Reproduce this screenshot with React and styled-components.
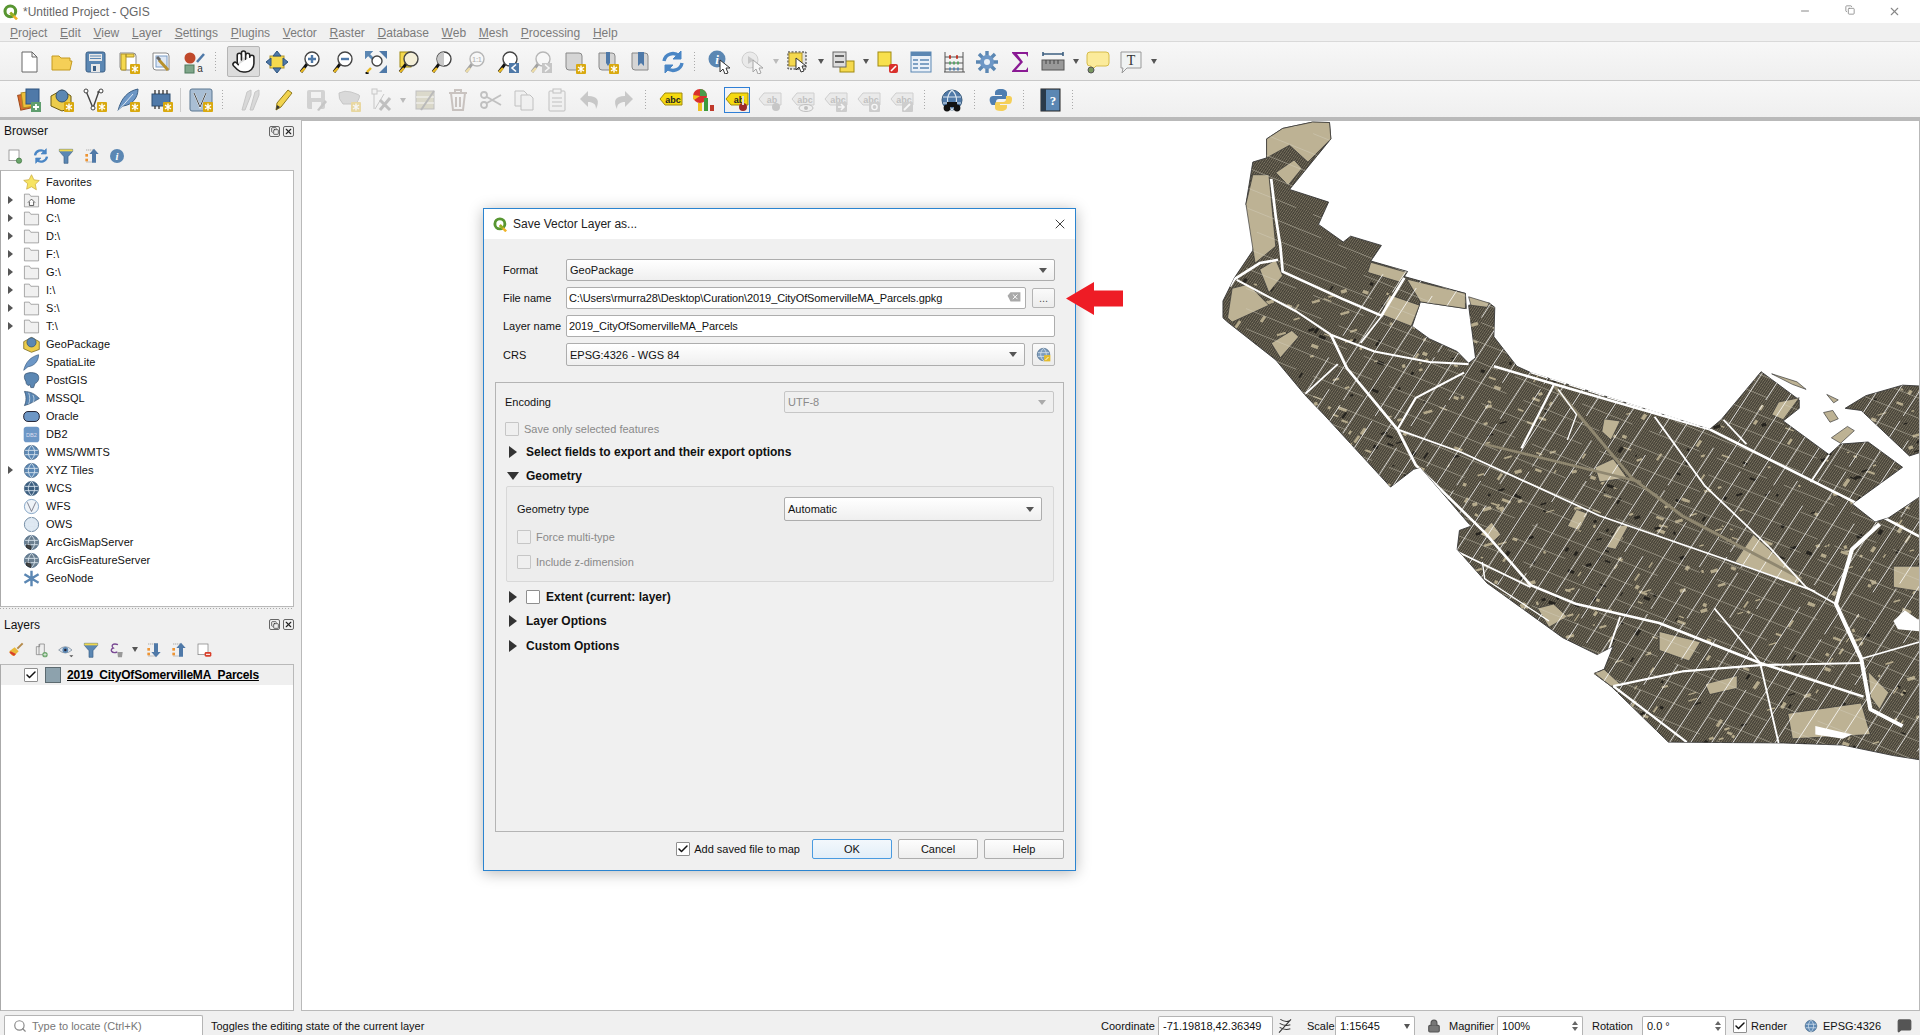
import React from "react";
import styled, { createGlobalStyle } from "styled-components";
import { Hand, Search, X, Minus, Copy, Check, Lock, MessageSquare } from "lucide-react";

const GlobalStyle = createGlobalStyle`
  html, body { margin: 0; padding: 0; background: #f0f0f0; }
  body { font-family: "Liberation Sans", Arial, sans-serif; font-size: 11px; color: #111; }
  * { box-sizing: border-box; }
`;

// --- icon parts ---
const Star = ({ x = 14, y = 14 }) => (
  <g transform={`translate(${x} ${y})`}>
    <rect width="10" height="10" fill="#d9a90f" rx="1" />
    <path d="M5 1.5v7M2 3l6 4M8 3L2 7" stroke="#fff" strokeWidth="1.4" />
  </g>
);
const Lens = ({ fill = "#fff", x = 14, y = 9, r = 7 }) => (
  <g>
    <path d={`M${x - r * 0.7} ${y + r * 0.7}L3 22`} stroke="#111" strokeWidth="3" />
    <path d={`M7 18L3 22`} stroke="#e8b923" strokeWidth="2.4" />
    <circle cx={x} cy={y} r={r} fill={fill} stroke="#444" strokeWidth="1.4" />
  </g>
);
const Page = ({ fill = "#eee", stroke = "#888" }) => (
  <path d="M4 3h13q3 0 3 3v14H7q-3 0-3-3z" fill={fill} stroke={stroke} />
);
const Pointer = ({ x = 11, y = 9 }) => (
  <path transform={`translate(${x} ${y})`} d="M0 0l0 12 3-3 2 5 3-1-2-5h4z" fill="#fff" stroke="#333" strokeWidth="1" />
);
const LabelTag = ({ fill = "#f5d90f", stroke = "#a08a10", color = "#222", t = "abc" }) => (
  <g>
    <path d="M1 11l5-6h17v12H6z" fill={fill} stroke={stroke} />
    <text x="14" y="14.5" fontSize="9" fontWeight="700" textAnchor="middle" fill={color} fontFamily="Liberation Sans">{t}</text>
  </g>
);
const Globe = ({ c = "#5b87b3" }) => (
  <g>
    <circle cx="12" cy="12" r="10" fill={c} stroke="#3d5f80" />
    <path d="M3 9h18M3 15h18M12 2c-6 6-6 14 0 20M12 2c6 6 6 14 0 20" stroke="#dbe6f0" fill="none" strokeWidth="1.2" />
  </g>
);

const icons = {
  new: <path d="M5 2h10l5 5v15H5z M15 2v5h5" fill="#fff" stroke="#666" />,
  open: <path d="M2 20V6h7l2 2h9v3h2l-2 9z" fill="#f5cf57" stroke="#c49a20" />,
  save: (<g><rect x="3" y="2" width="19" height="20" rx="2" fill="#5b87b3" stroke="#3b5f85" /><rect x="6" y="4" width="13" height="7" fill="#e8e8e8" /><path d="M7 6h11M7 8.5h11" stroke="#5b87b3" /><rect x="8" y="14" width="9" height="8" fill="#e8e8e8" /><rect x="10" y="16" width="3" height="5" fill="#3b5f85" /></g>),
  layoutNew: (<g><Page fill="#fff" /><path d="M5 4h5v16H5zM10 4h8v3h-8z" fill="#f5d94e" stroke="#b0932a" /><Star /></g>),
  layoutMgr: (<g><Page fill="#fff" /><rect x="7" y="6" width="11" height="11" fill="#dfe8f4" stroke="#7a9cc6" /><path d="M10 10l9 10" stroke="#b8912c" strokeWidth="3" /><path d="M8 7l3 3" stroke="#666" strokeWidth="3" /></g>),
  style: (<g><circle cx="8" cy="8" r="5.5" fill="#c0492b" /><path d="M15 12l7-8" stroke="#4f79a8" strokeWidth="2.5" /><rect x="3" y="15" width="9" height="8" fill="#7fa68a" stroke="#4f7a5c" /><text x="18" y="22" fontSize="10" fill="#333" textAnchor="middle" fontFamily="Liberation Sans">a</text></g>),
  panSel: (<g><rect x="5" y="6" width="14" height="12" fill="#f5d94e" stroke="#b0932a" /><path d="M12 1l4 5H8zM12 23l-4-5h8zM1 12l5-4v8zM23 12l-5 4V8z" fill="#4f79a8" stroke="#2f5580" /></g>),
  zoomIn: (<g><Lens /><path d="M10 9h8M14 5v8" stroke="#4f79a8" strokeWidth="2.4" /></g>),
  zoomOut: (<g><Lens /><path d="M10 9h8" stroke="#4f79a8" strokeWidth="2.4" /></g>),
  zoomFull: (<g><path d="M1 1h8L1 9zM23 1h-8l8 8zM23 23h-8l8-8z" fill="#4f79a8" /><path d="M1 1h8l-3 3 4 4-2 2-4-4-3 3z" fill="#5b87b3" /><Lens x="13" y="11" r="5" /></g>),
  zoomSel: (<g><rect x="3" y="2" width="11" height="15" fill="#f5d94e" stroke="#a08a10" /><Lens fill="#f4efd8" /></g>),
  zoomLayer: (<g><Lens /><path d="M14 2a7 7 0 0 0 0 14z" fill="#c8c8c8" /></g>),
  zoom11: (<g opacity=".35"><Lens /><text x="14" y="11.500" fontSize="6.500" fontWeight="700" textAnchor="middle" fill="#555" fontFamily="Liberation Sans">1:1</text></g>),
  zoomLast: (<g><Lens /><rect x="13" y="13" width="10" height="10" fill="#4f79a8" /><path d="M20 14.5L16 18l4 3.5" stroke="#fff" strokeWidth="1.6" fill="none" /></g>),
  zoomNext: (<g opacity=".35"><Lens /><rect x="13" y="13" width="10" height="10" fill="#777" /><path d="M16 14.5l4 3.5-4 3.5" stroke="#fff" strokeWidth="1.6" fill="none" /></g>),
  mapNew: (<g><Page fill="#d5d5d5" /><Star /></g>),
  mapMark: (<g><Page fill="#d5d5d5" /><path d="M11 2h4v11l-2 3-2-3z" fill="#4f79a8" /><Star /></g>),
  mapShow: (<g><Page fill="#d5d5d5" /><path d="M10 2h6v14l-3-3-3 3z" fill="#4f79a8" /></g>),
  refresh: (<g fill="none" strokeWidth="3.4" stroke="#4a86c5"><path d="M3 11a9 9 0 0 1 15-5" /><path d="M21 13a9 9 0 0 1-15 5" /><path d="M20 1v8h-8z" fill="#4a86c5" strokeWidth="1" /><path d="M4 23v-8h8z" fill="#4a86c5" strokeWidth="1" /></g>),
  identify: (<g><circle cx="9" cy="9" r="8.5" fill="#5b87b3" /><text x="9" y="14" fontSize="13" fontStyle="italic" fontWeight="700" textAnchor="middle" fill="#fff" fontFamily="Liberation Serif">i</text><Pointer x="12" y="10" /></g>),
  actions: (<g opacity=".4"><circle cx="9" cy="10" r="8" fill="#ddd" stroke="#999" /><path d="M7 6l6 4-6 4z" fill="#888" /><Pointer x="12" y="10" /></g>),
  select: (<g><rect x="2" y="2" width="18" height="17" fill="#e2e2e2" stroke="#222" strokeDasharray="2 1.5" /><rect x="3" y="3" width="13" height="13" fill="#f5d94e" stroke="#b0932a" /><Pointer x="10" y="8" /></g>),
  selForm: (<g><rect x="9" y="11" width="14" height="11" fill="#f5d94e" stroke="#a08a10" /><rect x="2" y="2" width="13" height="15" fill="#ddd" stroke="#666" /><path d="M4 6h9M4 12h9" stroke="#666" strokeWidth="2" /></g>),
  deselect: (<g><rect x="2" y="2" width="13" height="14" fill="#f8e04d" stroke="#a08a10" /><rect x="13" y="14" width="9" height="9" rx="2" fill="#d9302c" /><path d="M15 21l5-5" stroke="#fff" strokeWidth="1.6" /></g>),
  table: (<g><rect x="2" y="2" width="20" height="20" fill="#e9f0f8" stroke="#5b87b3" /><rect x="2" y="2" width="20" height="4" fill="#5b87b3" /><path d="M4 10h5M11 10h9M4 14h5M11 14h9M4 18h5M11 18h9" stroke="#5b87b3" strokeWidth="1.6" /></g>),
  abacus: (<g fill="none"><path d="M2 22h21M3 22V2M21 22V2M3 7h18M3 13h18M3 19h18" stroke="#555" /><path d="M7 7h2M14 7h2" stroke="#c0392b" strokeWidth="3.5" /><path d="M7 13h2M11 13h2M15 13h2" stroke="#5aa469" strokeWidth="3" /><path d="M7 19h2M11 19h2M15 19h2" stroke="#5b87b3" strokeWidth="3" /></g>),
  gear: (<g><path d="M12 1v22M1 12h22M4 4l16 16M20 4L4 20" stroke="#5b87b3" strokeWidth="3.4" /><circle cx="12" cy="12" r="7" fill="#6d97c6" /><circle cx="12" cy="12" r="3" fill="#e8f0f8" /></g>),
  sigma: <path d="M4 2h16v5l-2-3H9l6 8-7 8h10l2-3v5H4v-1l8-9-8-9z" fill="#8a1a94" />,
  ruler: (<g><path d="M2 4h20M2 2v4M22 2v4" stroke="#3d5f80" strokeWidth="1.6" /><rect x="1" y="10" width="22" height="10" fill="#999" stroke="#555" /><path d="M5 10v4M9 10v4M13 10v4M17 10v4" stroke="#444" /></g>),
  tip: (<g><path d="M4 2h16q3 0 3 3v8q0 3-3 3H10l-5 5v-5H4q-3 0-3-3V5q0-3 3-3z" fill="#fbeb9b" stroke="#d6bc4a" /><circle cx="5" cy="20" r="3" fill="#78965f" stroke="#555" /></g>),
  textT: (<g><path d="M2 2h20v16H8l-5 5 1-5H2z" fill="#f0f3f3" stroke="#999" /><text x="12" y="15" fontSize="14" fontFamily="Liberation Serif" textAnchor="middle" fill="#333">T</text></g>),
  dsm: (<g><rect x="2" y="6" width="13" height="15" fill="#d96b2c" stroke="#a04a1a" transform="rotate(-12 8 13)" /><rect x="5" y="4" width="13" height="15" fill="#eebf3b" stroke="#b08a20" transform="rotate(-8 11 11)" /><rect x="9" y="1" width="13" height="15" fill="#4f79a8" stroke="#2f5580" /><rect x="14" y="14" width="10" height="10" fill="#5f9e6e" /><path d="M19 16v6M16 19h6" stroke="#fff" strokeWidth="1.8" /></g>),
  gpkg: (<g><path d="M1 8l11-6 9 6v12l-9 3-11-5z" fill="#eccc4a" stroke="#6b5a12" /><circle cx="12" cy="8" r="6" fill="#5b87b3" stroke="#33506e" /><Star /></g>),
  vShape: (<g><path d="M3 3l7 17 6-17" fill="none" stroke="#444" strokeWidth="1.4" /><path d="M14 4h6" stroke="#444" /><circle cx="3" cy="3" r="2" fill="#fff" stroke="#444" /><circle cx="18" cy="3" r="2" fill="#fff" stroke="#444" /><circle cx="10" cy="20" r="2" fill="#fff" stroke="#444" /><Star /></g>),
  feather: (<g><path d="M2 23C5 10 12 3 22 1c0 9-6 16-15 17z" fill="#6d97c6" stroke="#3b5f85" /><path d="M2 23L17 6" stroke="#dde8f2" /><Star /></g>),
  chip: (<g><rect x="3" y="6" width="18" height="12" fill="#4f79a8" stroke="#2f4f70" /><path d="M6 2v4M10 2v4M14 2v4M18 2v4M6 18v3M10 18v3" stroke="#333" strokeWidth="1.3" /><Star /></g>),
  meshV: (<g><rect x="1" y="1" width="22" height="22" rx="2" fill="#a9bed4" stroke="#5a7690" /><path d="M5 5l6 14 6-14" fill="none" stroke="#fff" strokeWidth="1.6" /><path d="M5 5l6 14 6-14" fill="none" stroke="#444" /><Star /></g>),
  pencils: (<g opacity=".35"><path d="M4 22L9 4l4-2 0 5-6 15zM12 22l5-18 4-2v5l-6 15z" fill="#aaa" stroke="#777" /></g>),
  pencil: (<g><path d="M5 22l1-7L17 2l4 3-11 14z" fill="#f1d34e" stroke="#8f7a1e" /><path d="M5 22l1-5 3 2z" fill="#333" /></g>),
  saveOff: (<g opacity=".3"><rect x="3" y="2" width="18" height="19" rx="2" fill="#888" /><rect x="7" y="4" width="10" height="6" fill="#eee" /><rect x="8" y="14" width="9" height="7" fill="#eee" /><path d="M13 22l8-10 2 2-8 9z" fill="#666" /></g>),
  addRec: (<g opacity=".35"><path d="M2 5q6-3 12-1t8 3-3 9H6q-5-5-4-11z" fill="#aaa" stroke="#777" /><Star /></g>),
  vertex: (<g opacity=".4"><path d="M4 3v18M4 3h8M5 21l9-15" stroke="#888" fill="none" /><rect x="2" y="1" width="5" height="5" fill="#eee" stroke="#888" /><path d="M10 12l10 10M20 10L10 22" stroke="#777" strokeWidth="3" /></g>),
  tableEdit: (<g opacity=".4"><rect x="3" y="3" width="18" height="18" fill="#b8b38f" stroke="#777" /><path d="M3 9h18M3 15h18" stroke="#fff" /><path d="M8 22L21 3" stroke="#666" strokeWidth="2" /></g>),
  trash: (<g opacity=".4" fill="none" stroke="#8a7a72" strokeWidth="2"><path d="M3 5h18M9 5V2h6v3M5 5l2 17h10l2-17M10 9v10M14 9v10" /></g>),
  scissors: (<g opacity=".4" fill="none" stroke="#777" strokeWidth="1.8"><circle cx="5" cy="7" r="3" /><circle cx="5" cy="17" r="3" /><path d="M8 9l14 8M8 15l14-8" /></g>),
  copy: (<g opacity=".4" fill="#eee" stroke="#777"><path d="M3 3h9l3 3v12H3z" /><path d="M9 7h9l3 3v12H9z" /></g>),
  paste: (<g opacity=".4" fill="#eee" stroke="#777"><rect x="4" y="3" width="16" height="20" rx="1" /><rect x="8" y="1" width="8" height="4" /><path d="M7 10h10M7 14h10M7 18h10" /></g>),
  undo: <path opacity=".35" d="M10 3L2 11l8 8v-5c5 0 8 2 8 7 4-8 2-13-8-13z" fill="#777" />,
  redo: <path opacity=".35" d="M14 3l8 8-8 8v-5c-5 0-8 2-8 7-4-8-2-13 8-13z" fill="#777" />,
  labels: <LabelTag />,
  diagram: (<g><circle cx="8" cy="8" r="7" fill="#d9302c" /><path d="M8 8V1a7 7 0 0 1 7 7z" fill="#4a9c4a" /><path d="M8 8L2 12a7 7 0 0 1-1-5z" fill="#f0c020" /><rect x="6" y="15" width="4" height="8" fill="#f0c020" /><rect x="12" y="10" width="4" height="13" fill="#3c9a3c" /><rect x="18" y="17" width="4" height="6" fill="#c0392b" /></g>),
  labelPin: (<g><LabelTag t="ab" /><circle cx="18" cy="19" r="4" fill="#9c2a2a" /><path d="M18 8v9" stroke="#ddd" strokeWidth="2" /></g>),
  labelPinOff: (<g opacity=".4"><LabelTag t="ab" fill="#ddd" stroke="#999" color="#777" /><circle cx="18" cy="19" r="4" fill="#888" /></g>),
  labelEye: (<g opacity=".4"><LabelTag fill="#ddd" stroke="#999" color="#777" /><ellipse cx="15" cy="20" rx="7" ry="3.5" fill="#eee" stroke="#777" /><circle cx="15" cy="20" r="2" fill="#777" /></g>),
  labelMove: (<g opacity=".4"><LabelTag fill="#ddd" stroke="#999" color="#777" /><rect x="12" y="14" width="11" height="10" rx="1" fill="#999" /><path d="M14 19h5M17 16l3 3-3 3" stroke="#fff" strokeWidth="1.6" fill="none" /></g>),
  labelRot: (<g opacity=".4"><LabelTag fill="#ddd" stroke="#999" color="#777" /><rect x="12" y="14" width="11" height="10" rx="1" fill="#999" /><circle cx="17.5" cy="19" r="2.6" fill="none" stroke="#fff" strokeWidth="1.4" /></g>),
  labelEdit: (<g opacity=".4"><LabelTag fill="#ddd" stroke="#999" color="#777" /><rect x="12" y="14" width="11" height="10" rx="1" fill="#999" /><path d="M14 22l6-6" stroke="#fff" strokeWidth="1.8" /></g>),
  meta: (<g><Globe c="#4f79a8" /><circle cx="7" cy="20" r="3.4" fill="#111" /><circle cx="17" cy="20" r="3.4" fill="#111" /><path d="M7 14h10v5H7z" fill="#111" /></g>),
  python: (<g><path d="M12 1c-5 0-6 2-6 4v2h7v1H4c-3 0-4 3-3 6s2 3 3 3h3v-3c0-2 1-3 3-3h6c2 0 2-1 2-3V5c0-2-2-4-6-4z" fill="#4f7eb0" /><path d="M12 23c4 0 6-2 6-4v-2h-7v-1h9c2 0 3-2 3-5s-2-3-3-3h-3v3c0 2-1 3-3 3H8c-2 0-2 1-2 3v3c0 2 2 3 6 3z" fill="#f5cf57" /></g>),
  help: (<g><rect x="3" y="1" width="19" height="22" fill="#5b87b3" stroke="#222" /><rect x="3" y="1" width="5" height="22" fill="#2a3a4a" /><text x="15" y="17" fontSize="13" fontWeight="700" textAnchor="middle" fill="#fff" fontFamily="Liberation Serif">?</text></g>),
  addDoc: (<g fill="#fff"><rect x="3" y="3" width="15" height="16" stroke="#777" /><circle cx="18" cy="19" r="4" fill="#6aa56a" stroke="#3d703d" /></g>),
  filter: (<g><path d="M2 2h20v3l-7 8v10h-6V13L2 5z" fill="#5b87b3" stroke="#3b5f85" /><path d="M2 2h20v3H2z" fill="#f0d84e" /></g>),
  collapse: (<g><path d="M3 3h11v18H3" fill="none" stroke="#888" strokeDasharray="2 1" /><rect x="2" y="9" width="4" height="4" fill="#ee9433" /><rect x="2" y="16" width="4" height="4" fill="#ee9433" /><path d="M15 1l7 8h-4v13h-6V9H8z" fill="#4f79a8" /></g>),
  expand: (<g><path d="M3 3h11v18H3" fill="none" stroke="#888" strokeDasharray="2 1" /><rect x="2" y="9" width="4" height="4" fill="#ee9433" /><rect x="2" y="16" width="4" height="4" fill="#ee9433" /><path d="M15 23l7-8h-4V2h-6v13H8z" fill="#4f79a8" /></g>),
  info: (<g><circle cx="12" cy="12" r="10.5" fill="#5b87b3" /><text x="12" y="18" fontSize="16" fontStyle="italic" fontWeight="700" textAnchor="middle" fill="#fff" fontFamily="Liberation Serif">i</text></g>),
  brush: (<g><path d="M2 14l8-6 6 6-7 7q-5 0-7-7z" fill="#e9b93a" /><path d="M2 16l7 5 3-3-8-4z" fill="#d9402c" /><path d="M14 10l8-8" stroke="#b58a4a" strokeWidth="3" /></g>),
  addGroup: (<g><path d="M5 7h5V3h7v16H5z" fill="#eee" stroke="#777" /><path d="M9 3v16" stroke="#777" /><circle cx="18" cy="19" r="4" fill="#6aa56a" /><path d="M18 16.5v5M15.5 19h5" stroke="#fff" /></g>),
  eye: (<g><path d="M1 12q10-10 20 0-10 9-20 0z" fill="#dde5ee" stroke="#6b7b8c" /><circle cx="11" cy="12" r="4.4" fill="#5b87b3" /><circle cx="11" cy="12" r="1.8" fill="#223" /><path d="M17 20h6l-3 3z" fill="#555" /></g>),
  epsilon: (<g><path d="M15 4c-8-3-11 2-7 5-6 2-3 9 6 6" fill="none" stroke="#7a4a94" strokeWidth="2" /><path d="M14 15h8l-1 8h-6z" fill="#999" /></g>),
  removeLayer: (<g fill="#fff"><rect x="3" y="3" width="15" height="16" stroke="#777" /><rect x="13" y="15" width="10" height="7" rx="2" fill="#d9402c" /><path d="M15 18.5h6" stroke="#fff" strokeWidth="1.6" /></g>),
  star: <path d="M12 1l3.4 7.2 7.6 1-5.6 5.3 1.5 7.8L12 18l-6.9 3.4 1.5-7.8L1 9l7.6-1z" fill="#f7e463" stroke="#c9a83a" />,
  folder: <path d="M2 21V3h7l2 3h11v15z" fill="#f0f0f0" stroke="#888" />,
  home: (<g><path d="M2 21V3h7l2 3h11v15z" fill="#f0f0f0" stroke="#888" /><path d="M7 15l5-5 5 5M9 14v5h6v-5" fill="#fff" stroke="#222" /></g>),
  gpkgS: (<g><path d="M1 8l11-6 11 6v11l-11 4-11-5z" fill="#eccc4a" stroke="#6b5a12" /><circle cx="12" cy="9" r="6.5" fill="#5b87b3" stroke="#33506e" /></g>),
  spatialite: <path d="M1 23C4 11 11 4 22 1c0 9-6 16-15 17z" fill="#6d97c6" stroke="#3b5f85" />,
  postgis: <path d="M3 3c5-3 14-3 18 1 3 5 0 11-4 12l-2 6h-4l-1-4-3 1q-3-2-3-6c-2-3-3-7-1-10z" fill="#5b87b3" stroke="#33506e" />,
  mssql: (<g><path d="M2 2c8 0 16 4 21 10-5 3-13 8-21 10 3-6 3-14 0-20z" fill="#5b87b3" stroke="#33506e" /><path d="M8 4c2 5 2 11 0 16M14 7c2 4 2 7 0 11" stroke="#dbe6f0" fill="none" /></g>),
  oracle: <rect x="1" y="5" width="22" height="14" rx="6" fill="#6d97c6" stroke="#223" strokeWidth="1.4" />,
  db2: (<g><rect x="1" y="1" width="22" height="22" rx="4" fill="#6d97c6" /><text x="12" y="15" fontSize="8" textAnchor="middle" fill="#dde" fontFamily="Liberation Sans">DB2</text></g>),
  globe: <Globe />,
  globeDark: <Globe c="#3d5f80" />,
  globeLight: <Globe c="#dfe9f3" />,
  globeWfs: (<g><circle cx="12" cy="12" r="10" fill="#eef3f8" stroke="#5b87b3" /><path d="M6 6l6 13 6-13" fill="none" stroke="#556" /></g>),
  arcgis: (<g><Globe c="#6b7f90" /><path d="M5 15l6 2v5l-6-3zM8 13l2 2" stroke="#222" fill="#444" /></g>),
  geonode: (<g><path d="M12 1v22M2 6l20 12M22 6L2 18" stroke="#5b87b3" strokeWidth="3.4" /><circle cx="12" cy="12" r="3" fill="#5b87b3" /></g>),
  crs: (<g><Globe c="#7d9cbc" /><rect x="13" y="13" width="10" height="10" fill="#e3bb2c" /><path d="M15 21l5-5" stroke="#fff" strokeWidth="1.4" /></g>),
  clear: (<g><path d="M1 8l5-6h17v16H6z" fill="#a9a9a9" /><path d="M10 6l8 8M18 6l-8 8" stroke="#fff" strokeWidth="1.6" /></g>),
  noRender: (<g fill="none" stroke="#333" strokeWidth="1.6"><path d="M5 2q8 5 14 2M4 8q8 5 16 2M4 14q8 5 16 2M3 22L21 2" /></g>),
};

const QLogo = ({ size = 16 }) => (
  <svg width={size} height={size} viewBox="0 0 24 24">
    <circle cx="11" cy="11" r="8" fill="none" stroke="#589632" strokeWidth="4.6" />
    <path d="M11 13l10 10" stroke="#f0b429" strokeWidth="4" />
    <path d="M11 13l5 5" stroke="#93b023" strokeWidth="4" />
  </svg>
);

const Icon = ({ name, size = 24 }) => (
  <svg width={size} height={size} viewBox="0 0 24 24">{icons[name]}</svg>
);

// --- window chrome ---
const Screen = styled.div`
  width: 1920px;
  height: 1035px;
  display: flex;
  flex-direction: column;
  overflow: hidden;
  background: #f0f0f0;
`;
const TitleBar = styled.div`
  height: 23px;
  background: #fff;
  display: flex;
  align-items: center;
  padding-left: 3px;
  gap: 4px;
  font-size: 12px;
  color: #666;
`;
const WinButtons = styled.div`
  margin-left: auto;
  display: flex;
  color: #888;
  width: 135px;
  margin-right: 3px;
  & > span { width: 45px; display: flex; justify-content: center; }
`;
const MenuBar = styled.div`
  height: 19px;
  display: flex;
  align-items: center;
  gap: 12.7px;
  padding: 2px 0 0 10px;
  color: #7b7b7b;
  font-size: 12px;
  border-bottom: 1px solid #d9d9d9;
`;
const Toolbar = styled.div`
  height: 39px;
  display: flex;
  align-items: center;
  padding: ${(p) => (p.$last ? "2px" : "1px")} 0 0 12px;
  background: linear-gradient(#f7f7f7, #efefef);
  border-bottom: ${(p) => (p.$last ? "3px solid #b9b9b9" : "1px solid #c8c8c8")};
`;
const ToolBtn = styled.div`
  width: 33px;
  height: 31px;
  flex: none;
  display: flex;
  align-items: center;
  justify-content: center;
  border: 1px solid ${(p) => (p.$active ? "#b5b5b5" : "transparent")};
  border-radius: 2px;
  background: ${(p) => (p.$active ? "#dcdcdc" : "transparent")};
  & > span {
    width: 26px;
    height: 26px;
    display: flex;
    align-items: center;
    justify-content: center;
    border: ${(p) => (p.$framed ? "1px solid #2f7fd6" : "none")};
  }
`;
const Grip = styled.div`
  width: ${(p) => p.$w}px;
  flex: none;
  height: 22px;
  background-image: radial-gradient(#aaa 0.8px, transparent 1px);
  background-size: 3px 3px;
  background-repeat: repeat-y;
  background-position: ${(p) => p.$at ?? 4}px 0;
`;
const Caret = styled.div`
  width: ${(p) => p.$w ?? 12}px;
  flex: none;
  display: flex;
  justify-content: center;
  &::after {
    content: "";
    flex: none;
    border: 3.5px solid transparent;
    border-top: 5px solid ${(p) => (p.$off ? "#bbb" : "#555")};
    border-bottom: 0;
  }
`;
const Separator = styled.div`
  width: 7px;
  flex: none;
  height: 24px;
  background: linear-gradient(#ccc, #ccc) center / 1px 100% no-repeat;
`;

// --- main area ---
const Main = styled.div`
  flex: 1;
  min-height: 0;
  display: flex;
`;
const Side = styled.div`
  width: 301px;
  flex: none;
  display: flex;
  flex-direction: column;
`;
const DockHead = styled.div`
  height: ${(p) => p.$h}px;
  display: flex;
  align-items: center;
  padding: ${(p) => p.$top ?? 0}px 7px 0 4px;
  font-size: 12px;
  color: #111;
  justify-content: space-between;
`;
const DockBtns = styled.div`
  display: flex;
  gap: 3px;
`;
const DockBtn = styled.span`
  width: 11px;
  height: 11px;
  border: 1px solid #666;
  border-radius: 2px;
  display: flex;
  align-items: center;
  justify-content: center;
  color: #222;
`;
const DockTools = styled.div`
  height: ${(p) => p.$h}px;
  display: flex;
  align-items: center;
  gap: ${(p) => p.$gap ?? 9.5}px;
  padding-left: ${(p) => p.$pad ?? 7}px;
`;
const Tree = styled.div`
  width: 294px;
  height: ${(p) => p.$h}px;
  flex: ${(p) => (p.$grow ? 1 : "none")};
  padding-top: ${(p) => (p.$grow ? 0 : 2)}px;
  background: #fff;
  border: 1px solid #b9b9b9;
  border-left-color: #aaa;
`;
const TreeRow = styled.div`
  height: 18px;
  display: flex;
  align-items: center;
  font-size: 11px;
  letter-spacing: 0.05px;
  color: #111;
  & > svg { margin-left: 21px; margin-right: 6px; flex: none; }
`;
const Twisty = styled.span`
  width: 16px;
  flex: none;
  padding-left: 7px;
  margin-right: -15px;
  height: 8px;
  &::before {
    content: "";
    display: ${(p) => (p.$on ? "block" : "none")};
    width: 0;
    border: 4px solid transparent;
    border-left: 5px solid #555;
    border-right: 0;
  }
`;
const Splitter = styled.div`
  height: 4px;
  background: radial-gradient(#aaa 0.7px, transparent 1px) 140px 0 / 3px 3px repeat-x;
  width: 294px;
`;
const LayerRow = styled.div`
  height: 20px;
  background: #efefef;
  display: flex;
  align-items: center;
  padding-left: 23px;
  font-weight: 700;
  font-size: 12px;
  letter-spacing: -0.2px;
  text-decoration: underline;
  color: #000;
`;
const Swatch = styled.span`
  width: 16px;
  height: 16px;
  background: #8da2ad;
  border: 1px solid #5c6a70;
  margin: 0 6px 0 7px;
`;
const Canvas = styled.div`
  flex: 1;
  position: relative;
  background: #fff;
  border: 1px solid #b9b9b9;
  overflow: hidden;
`;
const MapSvg = styled.svg`
  position: absolute;
  left: 898px;
  top: -1px;
  width: 720px;
  height: 660px;
`;

// --- dialog ---
const Dialog = styled.div`
  position: absolute;
  left: 181px;
  top: 87px;
  width: 593px;
  height: 663px;
  background: #f0f0f0;
  border: 1px solid #2b84d0;
  box-shadow: 0 2px 14px rgba(0, 0, 0, 0.28);
  display: flex;
  flex-direction: column;
`;
const DialogTitle = styled.div`
  height: 30px;
  flex: none;
  background: #fff;
  display: flex;
  align-items: center;
  padding-left: 9px;
  gap: 5px;
  font-size: 12px;
  color: #222;
  & > svg:last-child { margin-left: auto; margin-right: 7px; color: #222; }
`;
const Form = styled.div`
  display: grid;
  grid-template-columns: 63px 1fr;
  row-gap: 6px;
  align-items: center;
  padding: 20px 20px 0 19px;
`;
const Label = styled.span`
  font-size: 11px;
  color: ${(p) => (p.$off ? "#8a8a8a" : "#111")};
  white-space: nowrap;
`;
const Combo = styled.div`
  height: ${(p) => p.$h ?? 22}px;
  flex: ${(p) => (p.$w ? "none" : 1)};
  width: ${(p) => (p.$w ? `${p.$w}px` : "auto")};
  display: flex;
  align-items: center;
  justify-content: space-between;
  padding: 0 ${(p) => p.$right ?? 7}px 0 3px;
  font-size: 11px;
  color: ${(p) => (p.$off ? "#8a8a8a" : "#111")};
  border: 1px solid ${(p) => (p.$off ? "#c6c6c6" : "#adadad")};
  border-radius: 2px;
  background: ${(p) => (p.$off ? "#efefef" : "linear-gradient(#fff, #efefef)")};
  &::after {
    content: "";
    border: 4px solid transparent;
    border-top: 5px solid ${(p) => (p.$off ? "#aaa" : "#555")};
    border-bottom: 0;
  }
`;
const TextBox = styled.div`
  height: 22px;
  flex: 1;
  display: flex;
  align-items: center;
  justify-content: space-between;
  padding: 0 4px 0 2px;
  background: #fff;
  border: 1px solid #adadad;
  border-radius: 2px;
  font-size: 11px;
  letter-spacing: -0.1px;
  white-space: nowrap;
`;
const FieldRow = styled.div`
  display: flex;
  align-items: center;
  gap: ${(p) => p.$gap ?? 6}px;
`;
const SmallBtn = styled.div`
  width: 23px;
  height: ${(p) => p.$h}px;
  flex: none;
  display: flex;
  align-items: center;
  justify-content: center;
  font-size: 11px;
  color: #555;
  border: 1px solid #b4b4b4;
  border-radius: 2px;
  background: linear-gradient(#fafafa, #ececec);
`;
const Scroller = styled.div`
  height: 450px;
  flex: none;
  margin: 16px 11px 0 11px;
  border: 1px solid #b4b4b4;
  padding: 8px 9px 0 9px;
`;
const ParamRow = styled.div`
  display: flex;
  align-items: center;
  justify-content: space-between;
`;
const CheckRow = styled.div`
  display: flex;
  align-items: center;
  gap: 5px;
  height: 13px;
  margin-top: ${(p) => p.$mt}px;
`;
const Box = styled.span`
  width: 14px;
  height: 14px;
  flex: none;
  display: flex;
  align-items: center;
  justify-content: center;
  margin: ${(p) => p.$margin ?? "0"};
  border: 1px solid ${(p) => (p.$off ? "#c6c6c6" : "#8f8f8f")};
  background: ${(p) => (p.$off ? "#efefef" : "#fff")};
  border-radius: 1px;
  color: #111;
`;
const SectionHead = styled.div`
  height: 18px;
  display: flex;
  align-items: center;
  margin-top: ${(p) => p.$mt}px;
  font-weight: 700;
  font-size: 12px;
  color: #111;
`;
const Disclosure = styled.span`
  width: 21px;
  flex: none;
  display: flex;
  justify-content: center;
  padding-right: 5px;
  &::before {
    content: "";
    border-style: solid;
    border-color: transparent;
    border-width: ${(p) => (p.$open ? "8px 6px 0 6px" : "6px 0 6px 8px")};
    ${(p) => (p.$open ? "border-top-color: #333;" : "border-left-color: #333;")}
  }
`;
const GroupBox = styled.div`
  height: 96px;
  margin: 1px 0 0 1px;
  padding: 10px 11px 0 10px;
  border: 1px solid #d8d8d8;
  border-radius: 2px;
  background: #ededed;
`;
const DialogFoot = styled.div`
  display: flex;
  align-items: center;
  justify-content: flex-end;
  gap: 6px;
  padding: 7px 11px 0 0;
`;
const FootCheck = styled.div`
  display: flex;
  align-items: center;
  gap: 4px;
  margin-right: 6px;
  font-size: 11px;
`;
const PushBtn = styled.div`
  width: 80px;
  height: 20px;
  display: flex;
  align-items: center;
  justify-content: center;
  font-size: 11px;
  border: 1px solid ${(p) => (p.$primary ? "#4a9be0" : "#adadad")};
  border-radius: 2px;
  background: ${(p) => (p.$primary ? "linear-gradient(#f3f8fc, #e2eef8)" : "linear-gradient(#fdfdfd, #eee)")};
`;
const RedArrow = styled.svg`
  position: absolute;
  left: 764px;
  top: 161px;
  width: 57px;
  height: 33px;
`;

// --- status bar ---
const StatusBar = styled.div`
  height: 24px;
  flex: none;
  display: flex;
  align-items: flex-end;
  padding-left: 4px;
  font-size: 11px;
`;
const Locator = styled.div`
  width: 199px;
  height: 20px;
  display: flex;
  align-items: center;
  gap: 5px;
  padding: 1px 0 0 8px;
  background: #fff;
  border: 1px solid #b4b4b4;
  border-bottom: 0;
  border-radius: 2px 2px 0 0;
  color: #777;
`;
const StatusMsg = styled.span`
  margin-left: 8px;
  height: 20px;
  padding-top: 1px;
  display: flex;
  align-items: center;
  color: #111;
`;
const StatusRight = styled.div`
  margin-left: auto;
  display: flex;
  align-items: center;
  height: 20px;
  padding-top: 1px;
`;
const StatusText = styled.span`
  width: ${(p) => p.$w}px;
  margin-left: ${(p) => p.$ml ?? 0}px;
  flex: none;
  white-space: nowrap;
  color: #111;
`;
const StatusField = styled.div`
  width: ${(p) => p.$w}px;
  margin-left: ${(p) => p.$ml ?? 4}px;
  height: 20px;
  flex: none;
  display: flex;
  align-items: center;
  justify-content: space-between;
  padding: 0 3px 0 4px;
  background: #fff;
  border: 1px solid #b4b4b4;
  border-bottom: 0;
  border-radius: 2px 2px 0 0;
  white-space: nowrap;
`;
const Spin = styled.span`
  width: 8px;
  display: flex;
  flex-direction: column;
  gap: 2px;
  align-items: center;
  &::before, &::after {
    content: "";
    border: 3px solid transparent;
  }
  &::before { border-bottom: 4px solid #666; border-top: 0; }
  &::after { border-top: 4px solid #666; border-bottom: 0; }
`;
const StatusIcon = styled.span`
  width: ${(p) => p.$w}px;
  margin-left: ${(p) => p.$ml ?? 0}px;
  margin-right: ${(p) => p.$mr ?? 0}px;
  flex: none;
  display: flex;
  justify-content: center;
  color: #555;
`;

// --- map drawing (coordinates follow a 1568 square mapped on 720x660) ---
const outline =
  "245,5 282,6 285,45 195,165 280,195 258,248 312,290 328,276 395,298 372,335 452,360 445,372 578,412 580,448 480,432 462,490 500,520 560,550 585,578 600,565 585,440 630,435 642,445 640,515 690,585 720,600 1110,735 1135,712 1222,598 1305,665 1305,685 1270,715 1370,795 1395,770 1455,765 1530,825 1420,912 1470,955 1500,945 1568,895 1568,1520 1510,1510 1400,1485 1270,1480 1020,1478 895,1345 858,1315 880,1305 900,1250 865,1270 790,1230 625,1100 560,1020 565,975 590,965 480,825 465,830 415,872 270,700 230,655 165,570 60,480 50,470 50,430 75,375 115,310 125,260 100,200 115,100 145,90 145,45 180,20";
const northEast = "1405,685 1450,655 1530,630 1568,632 1568,790 1545,798 1440,690";
const islets = [
  "1245,603 1300,622 1320,640 1290,628",
  "1365,652 1390,665 1380,672",
  "1358,695 1378,690 1390,710 1372,718",
  "1375,755 1410,728 1425,738 1395,768",
];
const parks = [
  "245,5 282,6 285,45 235,100 195,60 145,90 145,45 180,20",
  "165,125 205,95 222,115 192,155",
  "115,130 150,130 165,300 120,340 100,200",
  "60,470 70,400 105,390 150,440 70,480",
  "130,355 165,332 180,370 150,410",
  "412,415 478,440 460,490 395,462",
  "372,338 450,362 435,385 365,362",
  "450,378 578,412 578,448 480,432",
  "585,420 630,435 625,445 590,440",
  "155,530 200,500 215,515 175,565",
  "1165,1050 1205,985 1310,1090 1300,1105",
  "860,825 900,805 930,850 870,860",
  "935,960 905,1020 885,1015 910,965",
  "820,925 800,965 825,975 845,935",
  "610,985 635,955 655,985 640,1000",
  "735,1160 770,1150 800,1180 760,1205",
  "1000,1215 1090,1240 1065,1285 1000,1260",
  "1100,1340 1170,1320 1170,1350 1110,1365",
  "860,1315 880,1305 920,1345 895,1345",
  "1510,1060 1568,1060 1568,1120 1510,1110",
  "1280,1410 1440,1385 1460,1460 1290,1470",
  "1455,1310 1500,1360 1480,1400 1460,1370",
  "1260,670 1305,660 1270,712 1245,700",
  "880,710 915,715 895,760 875,740",
];
const mainRoads = [
  ["155,140 165,230 175,300 180,360 310,425 395,465 445,375", 6],
  ["65,395 75,378 130,340 170,332", 6],
  ["80,380 210,455 285,510 380,550 500,575 585,580", 5],
  ["285,510 320,590 430,735 470,820 620,980 720,1105 820,1150 1000,1195 1220,1290 1445,1370", 6],
  ["430,735 570,790 870,940 1200,1065 1340,1120", 4],
  ["430,735 470,660 575,600", 5],
  ["640,585 780,630 1110,735 1420,905 1568,990", 6],
  ["1480,960 1420,1020 1385,1150 1440,1280 1460,1400 1530,1440", 9],
  ["770,630 700,780", 5],
  ["780,640 820,700 800,760", 3],
  ["990,705 1100,870 1240,1015 1320,1110 1385,1150", 4],
  ["560,1025 720,1110", 4],
  ["615,1050 620,1090 760,1190", 3],
  ["900,1345 1050,1310 1220,1295 1440,1290", 5],
  ["1120,1160 1220,1290 1260,1480", 4],
  ["915,1180 890,1260", 4],
  ["900,1345 1060,1478", 5],
  ["400,460 350,530", 4],
  ["230,650 300,580", 4],
  ["1140,712 1190,770", 4],
  ["1370,795 1330,860", 4],
  ["1440,1280 1568,1240", 4],
  ["590,965 500,880", 2],
];
const blockLines = [];
for (let i = -8; i < 44; i++) {
  const x = i * 46;
  blockLines.push(`${x + 90},1500 ${x + 830},260`);
}
const crossLines = [];
for (let i = -14; i < 24; i++) {
  const y = 900 + i * 48;
  crossLines.push(`100,${y - 260} 1600,${y + 400}`);
}
// small lots and dark clusters so the blocks don't read as a flat texture
const speckle = [];
let seed = 7;
const rnd = (n) => {
  seed = (seed * 16807) % 2147483647;
  return seed % n;
};
for (let i = 0; i < 900; i++) {
  const x = 60 + rnd(1510);
  const y = 380 + rnd(1140);
  const dark = i % 3 === 0;
  speckle.push({ x, y, w: 5 + rnd(dark ? 12 : 16), h: 3 + rnd(6), dark, rot: -58 + rnd(3) * 40 });
}

const MapDrawing = () => (
  <MapSvg viewBox="0 0 1568 1568" preserveAspectRatio="none">
    <defs>
      <pattern id="lots" width="8" height="4.6" patternUnits="userSpaceOnUse" patternTransform="rotate(-58)">
        <rect width="8" height="4.6" fill="#33302a" />
        <rect x="0.8" y="0.8" width="2.4" height="2.6" fill="#a59b80" />
        <rect x="4.6" y="0.8" width="2.4" height="2.6" fill="#a59b80" />
      </pattern>
      <clipPath id="town">
        <polygon points={outline} />
        <polygon points={northEast} />
      </clipPath>
    </defs>
    <polygon points={outline} fill="url(#lots)" stroke="#333" strokeWidth="2" />
    <polygon points={northEast} fill="url(#lots)" stroke="#333" strokeWidth="2" />
    {islets.map((p) => (
      <polygon key={p} points={p} fill="#bdb294" stroke="#333" strokeWidth="1.5" />
    ))}
    <g clipPath="url(#town)">
      {speckle.map((s, i) => (
        <rect
          key={i}
          x={s.x}
          y={s.y}
          width={s.w}
          height={s.h}
          fill={s.dark ? "#26241f" : "#b5aa8c"}
          transform={`rotate(${s.rot} ${s.x} ${s.y})`}
        />
      ))}
    </g>
    {parks.map((p) => (
      <polygon key={p} points={p} fill="#bdb294" stroke="#333" strokeWidth="1.5" />
    ))}
    <g clipPath="url(#town)" fill="none" stroke="#fff">
      {blockLines.map((p, i) => (
        <polyline key={p} points={p} strokeWidth="1.8" strokeDasharray={`${170 + (i % 5) * 70} ${i % 3 === 0 ? 60 : 14}`} />
      ))}
      {crossLines.map((p, i) => (
        <polyline key={p} points={p} strokeWidth="1" stroke="#d5d0c2" strokeDasharray={`${120 + (i % 4) * 60} 40`} />
      ))}
      <polyline points="770,630 940,850 1050,940 1310,1090" stroke="#8f8770" strokeWidth="7" />
      <polyline points="620,770 960,860" stroke="#8f8770" strokeWidth="6" />
      {mainRoads.map(([p, w]) => (
        <polyline key={p} points={p} strokeWidth={w} strokeLinejoin="round" />
      ))}
    </g>
    <polygon points="1510,1190 1535,1165 1568,1190 1568,1215 1520,1210" fill="#fff" />
    <polygon points="1340,1440 1420,1460 1400,1470 1340,1460" fill="#fff" />
    <polyline points="720,600 1110,735" fill="none" stroke="#fff" strokeWidth="3" strokeDasharray="38 6" />
  </MapSvg>
);

// --- data ---
const bar1 = [
  ["i", "new"], ["i", "open"], ["i", "save"], ["i", "layoutNew"], ["i", "layoutMgr"], ["i", "style"], ["g", 17],
  ["pan"], ["i", "panSel"], ["i", "zoomIn"], ["i", "zoomOut"], ["i", "zoomFull"], ["i", "zoomSel"], ["i", "zoomLayer"],
  ["i", "zoom11"], ["i", "zoomLast"], ["i", "zoomNext"], ["i", "mapNew"], ["i", "mapMark"], ["i", "mapShow"], ["i", "refresh"], ["g", 14.5],
  ["i", "identify"], ["i", "actions"], ["c", 12, true], ["i", "select"], ["c"], ["i", "selForm"], ["c"], ["i", "deselect"],
  ["i", "table"], ["i", "abacus"], ["i", "gear"], ["i", "sigma"], ["i", "ruler"], ["c"], ["i", "tip"], ["i", "textT"], ["c"],
];
const bar2 = [
  ["i", "dsm"], ["i", "gpkg"], ["i", "vShape"], ["i", "feather"], ["i", "chip"], ["s"], ["i", "meshV"], ["g", 16],
  ["i", "pencils"], ["i", "pencil"], ["i", "saveOff"], ["i", "addRec"], ["i", "vertex"], ["c", 10.5, true], ["i", "tableEdit"],
  ["i", "trash"], ["i", "scissors"], ["i", "copy"], ["i", "paste"], ["i", "undo"], ["i", "redo"], ["g", 15],
  ["i", "labels"], ["i", "diagram"], ["f", "labelPin"], ["i", "labelPinOff"], ["i", "labelEye"], ["i", "labelMove"], ["i", "labelRot"], ["i", "labelEdit"], ["g", 17],
  ["i", "meta"], ["g", 16], ["i", "python"], ["g", 16], ["i", "help"], ["g", 16],
];
const browserItems = [
  ["star", "Favorites"], ["home", "Home", 1], ["folder", "C:\\", 1], ["folder", "D:\\", 1], ["folder", "F:\\", 1],
  ["folder", "G:\\", 1], ["folder", "I:\\", 1], ["folder", "S:\\", 1], ["folder", "T:\\", 1], ["gpkgS", "GeoPackage"],
  ["spatialite", "SpatiaLite"], ["postgis", "PostGIS"], ["mssql", "MSSQL"], ["oracle", "Oracle"], ["db2", "DB2"],
  ["globe", "WMS/WMTS"], ["globe", "XYZ Tiles", 1], ["globeDark", "WCS"], ["globeWfs", "WFS"], ["globeLight", "OWS"],
  ["arcgis", "ArcGisMapServer"], ["arcgis", "ArcGisFeatureServer"], ["geonode", "GeoNode"],
];
const menus = ["Project", "Edit", "View", "Layer", "Settings", "Plugins", "Vector", "Raster", "Database", "Web", "Mesh", "Processing", "Help"];

const BarItems = ({ items }) =>
  items.map(([kind, a, b], i) => {
    if (kind === "g") return <Grip key={i} $w={a} />;
    if (kind === "c") return <Caret key={i} $w={a} $off={b} />;
    if (kind === "s") return <Separator key={i} />;
    if (kind === "pan")
      return (
        <ToolBtn key={i} $active>
          <Hand size={25} fill="#fff" color="#222" strokeWidth={1.5} />
        </ToolBtn>
      );
    return (
      <ToolBtn key={i} $framed={kind === "f"}>
        <span><Icon name={a} /></span>
      </ToolBtn>
    );
  });

const DockButtons = () => (
  <DockBtns>
    <DockBtn><Copy size={8} /></DockBtn>
    <DockBtn><X size={9} strokeWidth={3} /></DockBtn>
  </DockBtns>
);

export default function App() {
  return (
    <Screen>
      <GlobalStyle />
      <TitleBar>
        <QLogo />
        <span>*Untitled Project - QGIS</span>
        <WinButtons>
          <span><Minus size={12} /></span>
          <span><Copy size={10} /></span>
          <span><X size={13} /></span>
        </WinButtons>
      </TitleBar>
      <MenuBar>
        {menus.map((m) => (
          <span key={m}><u>{m[0]}</u>{m.slice(1)}</span>
        ))}
      </MenuBar>
      <Toolbar>
        <BarItems items={bar1} />
      </Toolbar>
      <Toolbar $last>
        <BarItems items={bar2} />
      </Toolbar>
      <Main>
        <Side>
          <DockHead $h={22}>
            Browser
            <DockButtons />
          </DockHead>
          <DockTools $h={28} $pad={7}>
            {["addDoc", "refresh", "filter", "collapse", "info"].map((n) => (
              <Icon key={n} name={n} size={16} />
            ))}
          </DockTools>
          <Tree $h={437}>
            {browserItems.map(([icon, text, arrow]) => (
              <TreeRow key={text}>
                <Twisty $on={arrow} />
                <Icon name={icon} size={17} />
                {text}
              </TreeRow>
            ))}
          </Tree>
          <Splitter />
          <DockHead $h={24} $top={3}>
            Layers
            <DockButtons />
          </DockHead>
          <DockTools $h={29} $pad={8} $gap={9}>
            <Icon name="brush" size={16} />
            <Icon name="addGroup" size={16} />
            <Icon name="eye" size={16} />
            <Icon name="filter" size={16} />
            <Icon name="epsilon" size={16} />
            <Caret $w={4} />
            <Icon name="expand" size={16} />
            <Icon name="collapse" size={16} />
            <Icon name="removeLayer" size={16} />
          </DockTools>
          <Tree $grow>
            <LayerRow>
              <Box><Check size={12} strokeWidth={3} /></Box>
              <Swatch />
              2019_CityOfSomervilleMA_Parcels
            </LayerRow>
          </Tree>
        </Side>
        <Canvas>
          <MapDrawing />
          <Dialog>
            <DialogTitle>
              <QLogo size={15} />
              Save Vector Layer as...
              <X size={16} strokeWidth={1.3} />
            </DialogTitle>
            <Form>
              <Label>Format</Label>
              <FieldRow><Combo>GeoPackage</Combo></FieldRow>
              <Label>File name</Label>
              <FieldRow>
                <TextBox>
                  C:\Users\rmurra28\Desktop\Curation\2019_CityOfSomervilleMA_Parcels.gpkg
                  <Icon name="clear" size={14} />
                </TextBox>
                <SmallBtn $h={20}>...</SmallBtn>
              </FieldRow>
              <Label>Layer name</Label>
              <FieldRow><TextBox>2019_CityOfSomervilleMA_Parcels</TextBox></FieldRow>
              <Label>CRS</Label>
              <FieldRow $gap={7}>
                <Combo $h={23}>EPSG:4326 - WGS 84</Combo>
                <SmallBtn $h={23}><Icon name="crs" size={15} /></SmallBtn>
              </FieldRow>
            </Form>
            <Scroller>
              <ParamRow>
                <Label>Encoding</Label>
                <Combo $w={270} $off>UTF-8</Combo>
              </ParamRow>
              <CheckRow $mt={9}>
                <Box $off />
                <Label $off>Save only selected features</Label>
              </CheckRow>
              <SectionHead $mt={8}>
                <Disclosure />
                Select fields to export and their export options
              </SectionHead>
              <SectionHead $mt={6}>
                <Disclosure $open />
                Geometry
              </SectionHead>
              <GroupBox>
                <ParamRow>
                  <Label>Geometry type</Label>
                  <Combo $w={258} $h={24}>Automatic</Combo>
                </ParamRow>
                <CheckRow $mt={9}>
                  <Box $off />
                  <Label $off>Force multi-type</Label>
                </CheckRow>
                <CheckRow $mt={12}>
                  <Box $off />
                  <Label $off>Include z-dimension</Label>
                </CheckRow>
              </GroupBox>
              <SectionHead $mt={6}>
                <Disclosure />
                <Box $margin="0 6px 0 0" />
                Extent (current: layer)
              </SectionHead>
              <SectionHead $mt={6}>
                <Disclosure />
                Layer Options
              </SectionHead>
              <SectionHead $mt={7}>
                <Disclosure />
                Custom Options
              </SectionHead>
            </Scroller>
            <DialogFoot>
              <FootCheck>
                <Box><Check size={12} strokeWidth={3} /></Box>
                Add saved file to map
              </FootCheck>
              <PushBtn $primary>OK</PushBtn>
              <PushBtn>Cancel</PushBtn>
              <PushBtn>Help</PushBtn>
            </DialogFoot>
          </Dialog>
          <RedArrow viewBox="0 0 57 33">
            <path d="M0 16.5L28 0v8.500h29v16H28V33z" fill="#ee1c25" />
          </RedArrow>
        </Canvas>
      </Main>
      <StatusBar>
        <Locator>
          <Search size={14} color="#888" />
          Type to locate (Ctrl+K)
        </Locator>
        <StatusMsg>Toggles the editing state of the current layer</StatusMsg>
        <StatusRight>
          <StatusText $w={53}>Coordinate</StatusText>
          <StatusField $w={115}>-71.19818,42.36349</StatusField>
          <StatusIcon $w={20} $ml={2}><Icon name="noRender" size={16} /></StatusIcon>
          <StatusText $w={24} $ml={12}>Scale</StatusText>
          <StatusField $w={80}>1:15645<Caret $w={8} /></StatusField>
          <StatusIcon $w={18} $ml={10}><Lock size={14} fill="#777" /></StatusIcon>
          <StatusText $w={43} $ml={6}>Magnifier</StatusText>
          <StatusField $w={86} $ml={5}>100%<Spin /></StatusField>
          <StatusText $w={41} $ml={9}>Rotation</StatusText>
          <StatusField $w={84} $ml={9}>0.0 °<Spin /></StatusField>
          <Box $margin="0 0 0 7px"><Check size={12} strokeWidth={3} /></Box>
          <StatusText $w={35} $ml={4}>Render</StatusText>
          <StatusIcon $w={16} $ml={17}><Icon name="globe" size={14} /></StatusIcon>
          <StatusText $w={53} $ml={4}>EPSG:4326</StatusText>
          <StatusIcon $w={18} $ml={19} $mr={7}><MessageSquare size={15} fill="#555" /></StatusIcon>
        </StatusRight>
      </StatusBar>
    </Screen>
  );
}
